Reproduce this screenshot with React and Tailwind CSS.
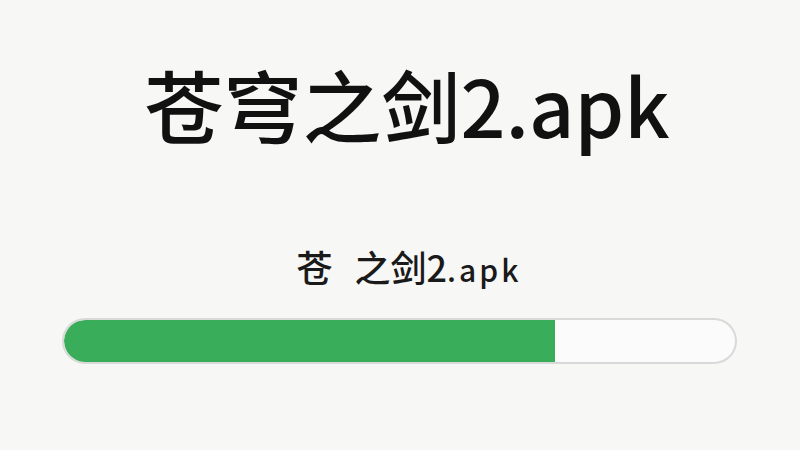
export default function App() {
  const progress = 73.3;
  const font = { fontFamily: '"Noto Sans CJK SC", "Noto Sans", sans-serif' };

  return (
    <div className="w-[800px] h-[450px] bg-[#f7f7f5] flex flex-col items-center" style={font}>
      <h1 className="mt-[54px] ml-[14px] text-[79px] leading-[100px] font-medium text-[#111]">
        苍穹之剑2.apk
      </h1>
      <div className="mt-[92px] ml-[18px] flex items-baseline text-[#1a1a1a] font-medium">
        <span className="text-[36px] leading-[40px] mr-[22px]">苍</span>
        <span className="text-[36px] leading-[40px]">之剑2</span>
        <span className="text-[30px] leading-[40px] tracking-[3px]">.apk</span>
      </div>
      <div className="mt-[29px] w-[675px] h-[46px] ml-[-2px] rounded-full bg-[#fbfbfb] border-2 border-[#d9d9d9] overflow-hidden flex">
        <div className="h-full bg-[#3aad5b] rounded-l-full" style={{ width: `${progress}%` }} />
      </div>
    </div>
  );
}
